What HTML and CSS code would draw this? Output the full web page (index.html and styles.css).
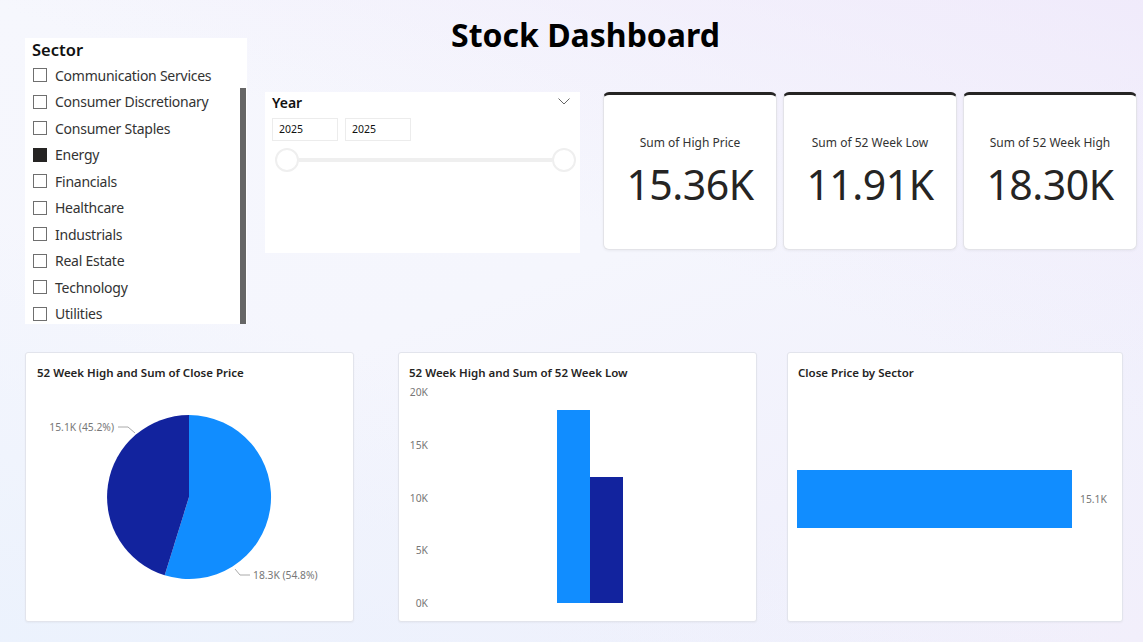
FILE: index.html
```html
<!DOCTYPE html>
<html>
<head>
<meta charset="utf-8">
<link rel="stylesheet" href="styles.css">
</head>
<body>
<div class="page">
  <div class="top">
    <div class="sector">
      <div class="sector-title">Sector</div>
      <div class="sector-list">
        <div class="item"><span class="box"></span>Communication Services</div>
        <div class="item"><span class="box"></span>Consumer Discretionary</div>
        <div class="item"><span class="box"></span>Consumer Staples</div>
        <div class="item"><span class="box checked"></span>Energy</div>
        <div class="item"><span class="box"></span>Financials</div>
        <div class="item"><span class="box"></span>Healthcare</div>
        <div class="item"><span class="box"></span>Industrials</div>
        <div class="item"><span class="box"></span>Real Estate</div>
        <div class="item"><span class="box"></span>Technology</div>
        <div class="item"><span class="box"></span>Utilities</div>
      </div>
      <div class="scrollbar"></div>
    </div>
    <div class="right">
      <h1 class="title">Stock Dashboard</h1>
      <div class="row">
        <div class="year">
          <div class="year-head">
            <span class="year-title">Year</span>
            <svg class="chev" width="12" height="7" viewBox="0 0 12 7"><path d="M0.5 0.5 L6 6 L11.5 0.5" fill="none" stroke="#666" stroke-width="1"/></svg>
          </div>
          <div class="inputs">
            <div class="inp">2025</div>
            <div class="inp">2025</div>
          </div>
          <div class="slider">
            <span class="thumb"></span>
            <span class="track"></span>
            <span class="thumb"></span>
          </div>
        </div>
        <div class="kpis">
          <div class="kpi"><div class="kpi-label">Sum of High Price</div><div class="kpi-val">15.36K</div></div>
          <div class="kpi"><div class="kpi-label">Sum of 52 Week Low</div><div class="kpi-val">11.91K</div></div>
          <div class="kpi"><div class="kpi-label">Sum of 52 Week High</div><div class="kpi-val">18.30K</div></div>
        </div>
      </div>
    </div>
  </div>
  <div class="bottom">
    <div class="card c1">
      <div class="card-title">52 Week High and Sum of Close Price</div>
      <svg width="328" height="237" viewBox="0 0 328 237">
        <path d="M163 112 L163 30 A82 82 0 1 1 138.7 190.3 Z" fill="#118DFF"/>
        <path d="M163 112 L138.7 190.3 A82 82 0 0 1 163 30 Z" fill="#12239E"/>
        <polyline points="92,42 102,42 109,48" fill="none" stroke="#aaa" stroke-width="1"/>
        <text x="88" y="46" text-anchor="end" class="lbl">15.1K (45.2%)</text>
        <polyline points="209,184 214,190 224,190" fill="none" stroke="#aaa" stroke-width="1"/>
        <text x="227" y="194" class="lbl">18.3K (54.8%)</text>
      </svg>
    </div>
    <div class="card c2">
      <div class="card-title">52 Week High and Sum of 52 Week Low</div>
      <svg width="359" height="237" viewBox="0 0 359 237">
        <text x="30" y="11" text-anchor="end" class="lbl">20K</text>
        <text x="30" y="64" text-anchor="end" class="lbl">15K</text>
        <text x="30" y="117" text-anchor="end" class="lbl">10K</text>
        <text x="30" y="169" text-anchor="end" class="lbl">5K</text>
        <text x="30" y="222" text-anchor="end" class="lbl">0K</text>
        <rect x="159" y="25" width="33" height="193" fill="#118DFF"/>
        <rect x="192" y="92" width="33" height="126" fill="#12239E"/>
      </svg>
    </div>
    <div class="card c3">
      <div class="card-title">Close Price by Sector</div>
      <svg width="336" height="237" viewBox="0 0 336 237">
        <rect x="10" y="85" width="275" height="58" fill="#118DFF"/>
        <text x="293" y="118" class="lbl">15.1K</text>
      </svg>
    </div>
  </div>
</div>
</body>
</html>
```

FILE: styles.css
```css
html, body {
  margin: 0;
  padding: 0;
}
body {
  width: 1143px;
  height: 642px;
  overflow: hidden;
  font-family: "Noto Sans", "Open Sans", sans-serif;
  color: #252423;
  background: linear-gradient(160deg, #f6f7fd 0%, #f5f6fd 45%, #f1f1fc 75%, #f2effb 100%);
}
.page {
  width: 1143px;
  height: 642px;
  background: linear-gradient(200deg, rgba(238,230,250,0.7) 0%, rgba(245,247,253,0) 40%), linear-gradient(20deg, rgba(235,242,253,0.9) 0%, rgba(245,247,253,0) 40%);
}
.top {
  display: flex;
  align-items: flex-start;
}
.sector {
  margin: 38px 0 0 25px;
  width: 222px;
  height: 286px;
  background: #fff;
  position: relative;
  box-sizing: border-box;
  padding: 1px 0 0 7px;
}
.sector-title {
  font-size: 16.5px;
  font-weight: 600;
  color: #111;
  line-height: 22px;
}
.sector-list {
  margin-top: 1px;
}
.item {
  display: flex;
  align-items: center;
  height: 26.5px;
  font-size: 14px;
  color: #333;
  letter-spacing: -0.25px;
}
.box {
  width: 12px;
  height: 12px;
  border: 1px solid #6f6f6f;
  margin: 0 8px 0 1px;
  flex: none;
}
.box.checked {
  background: #252423;
  border-color: #252423;
}
.scrollbar {
  position: absolute;
  right: 1px;
  top: 50px;
  bottom: 0;
  width: 6px;
  background: #666;
}
.right {
  margin-left: 18px;
  flex: 1;
}
.title {
  margin: 0;
  height: 92px;
  box-sizing: border-box;
  padding: 13px 0 0 186px;
  font-size: 32px;
  font-weight: 700;
  color: #000;
  line-height: 44px;
  letter-spacing: 0;
}
.row {
  display: flex;
  align-items: flex-start;
}
.year {
  width: 315px;
  height: 161px;
  background: #fff;
  box-sizing: border-box;
  padding: 0 7px 0 7px;
}
.year-head {
  display: flex;
  justify-content: space-between;
  align-items: center;
  height: 21px;
}
.year-title {
  font-size: 14px;
  font-weight: 600;
  color: #111;
}
.chev {
  margin-right: 3px;
  margin-top: -2px;
}
.inputs {
  display: flex;
  gap: 7px;
  margin-top: 5px;
}
.inp {
  width: 66px;
  height: 23px;
  box-sizing: border-box;
  border: 1px solid #ececec;
  font-size: 10.5px;
  line-height: 21px;
  padding-left: 6px;
  color: #111;
}
.slider {
  display: flex;
  align-items: center;
  margin-top: 7px;
  padding-left: 3px;
}
.thumb {
  width: 20px;
  height: 20px;
  border: 2px solid #efefef;
  border-radius: 50%;
  background: #fff;
  flex: none;
}
.track {
  flex: none;
  width: 253px;
  height: 4px;
  background: #efefef;
}
.kpis {
  display: flex;
  gap: 6px;
  margin-left: 23px;
}
.kpi {
  width: 174px;
  height: 158px;
  box-sizing: border-box;
  background: #fff;
  border: 1px solid #e3e3e8;
  border-top: 3px solid #252423;
  border-radius: 6px;
  box-shadow: 0 1px 3px rgba(0,0,0,0.05);
  text-align: center;
}
.kpi-label {
  font-size: 12px;
  color: #333;
  margin-top: 40px;
  line-height: 16px;
}
.kpi-val {
  font-size: 41px;
  color: #252423;
  line-height: 56px;
  margin-top: 5px;
  letter-spacing: -0.5px;
}
.bottom {
  display: flex;
  margin-top: 28px;
}
.card {
  height: 270px;
  background: #fff;
  border: 1px solid #e2e4ec;
  border-radius: 3px;
  box-sizing: border-box;
  box-shadow: 0 1px 2px rgba(0,0,0,0.04);
}
.card svg {
  display: block;
  margin-left: -1px;
}
.c1 { width: 329px; margin-left: 25px; }
.c2 { width: 359px; margin-left: 44px; }
.c3 { width: 336px; margin-left: 30px; }
.card-title {
  height: 32px;
  box-sizing: border-box;
  padding: 12px 0 0 10px;
  font-size: 11.5px;
  font-weight: 600;
  color: #252423;
  line-height: 16px;
}
.c1 .card-title { padding-left: 11px; }
.c1 svg { margin-left: 0; }
.lbl {
  font-family: "Noto Sans", "Open Sans", sans-serif;
  font-size: 10.3px;
  fill: #777;
}
```
